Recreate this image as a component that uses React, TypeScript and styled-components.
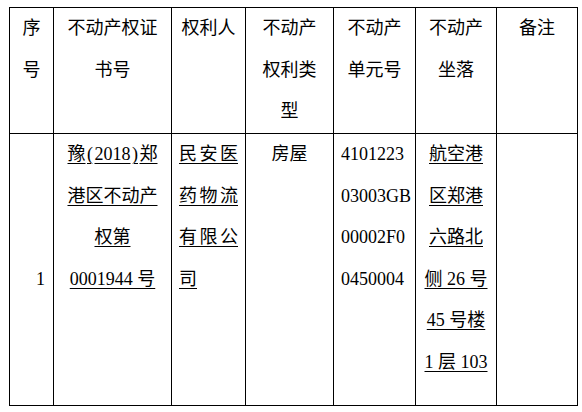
import React from "react";
import styled, { createGlobalStyle } from "styled-components";

const GlobalStyle = createGlobalStyle`
  html, body {
    margin: 0;
    padding: 0;
    background: #fff;
  }
`;

const Page = styled.div`
  padding: 7px 0 0 9px;
`;

const Grid = styled.table`
  border-collapse: collapse;
  table-layout: fixed;
  width: 569px;
  font-family: "Liberation Serif", "Noto Sans CJK SC", serif;
  font-size: 18px;
  line-height: 41.5px;
  color: #000;
`;

const Col = styled.col<{ $w: number }>`
  width: ${({ $w }) => $w}px;
`;

const HeadCell = styled.th`
  border: 1px solid #000;
  padding: 0 7px;
  height: 125px;
  vertical-align: top;
  text-align: center;
  font-weight: normal;
`;

const BodyCell = styled.td<{ $align?: "left" | "center" | "right" }>`
  border: 1px solid #000;
  padding: 0 7px;
  height: 271px;
  vertical-align: top;
  text-align: ${({ $align }) => $align || "center"};
`;

const IndexCell = styled(BodyCell)`
  height: 251px;
  vertical-align: middle;
  padding-top: 20px;
  padding-right: 8px;
`;

const Line = styled.div`
  white-space: nowrap;
`;

const Mark = styled.span`
  text-decoration: underline;
  text-decoration-thickness: 1px;
  text-underline-offset: 3px;
`;

const Paren = styled.span`
  margin: 0 1.5px;
`;

const Justified = styled.div`
  text-align: justify;
  text-decoration: underline;
  text-decoration-thickness: 1px;
  text-underline-offset: 3px;
`;

const widths = [44, 118, 74, 88, 82, 81, 81];

const headers = [
  ["序", "号"],
  ["不动产权证", "书号"],
  ["权利人"],
  ["不动产", "权利类", "型"],
  ["不动产", "单元号"],
  ["不动产", "坐落"],
  ["备注"],
];

const certLines = ["港区不动产", "权第", "0001944 号"];
const unitLines = ["4101223", "03003GB", "00002F0", "0450004"];
const addressLines = ["航空港", "区郑港", "六路北", "侧 26 号", "45 号楼", "1 层 103"];

export default function App() {
  return (
    <Page>
      <GlobalStyle />
      <Grid>
        <colgroup>
          {widths.map((w, i) => (
            <Col key={i} $w={w} />
          ))}
        </colgroup>
        <thead>
          <tr>
            {headers.map((lines, i) => (
              <HeadCell key={i}>
                {lines.map((l) => (
                  <Line key={l}>{l}</Line>
                ))}
              </HeadCell>
            ))}
          </tr>
        </thead>
        <tbody>
          <tr>
            <IndexCell $align="right">1</IndexCell>
            <BodyCell>
              <Line>
                <Mark>
                  豫<Paren>(</Paren>2018<Paren>)</Paren>郑
                </Mark>
              </Line>
              {certLines.map((l) => (
                <Line key={l}>
                  <Mark>{l}</Mark>
                </Line>
              ))}
            </BodyCell>
            <BodyCell $align="left">
              <Justified>民安医药物流有限公司</Justified>
            </BodyCell>
            <BodyCell>
              <Line>房屋</Line>
            </BodyCell>
            <BodyCell $align="left">
              {unitLines.map((l) => (
                <Line key={l}>{l}</Line>
              ))}
            </BodyCell>
            <BodyCell>
              {addressLines.map((l) => (
                <Line key={l}>
                  <Mark>{l}</Mark>
                </Line>
              ))}
            </BodyCell>
            <BodyCell />
          </tr>
        </tbody>
      </Grid>
    </Page>
  );
}
